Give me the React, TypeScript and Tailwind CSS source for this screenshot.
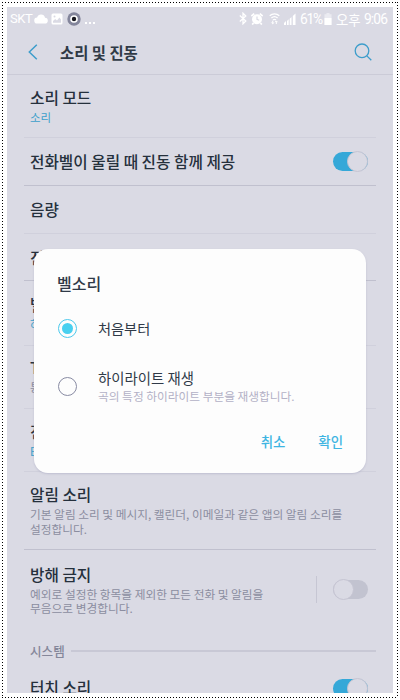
import React from "react";
import clsx from "clsx";

const Toggle: React.FC<{ on?: boolean }> = ({ on }) => (
  <div
    className={clsx(
      "flex h-[19px] w-[35px] shrink-0 items-center rounded-full",
      on ? "justify-end bg-[#35a8d8]" : "justify-start bg-[#c2c3d0]"
    )}
  >
    <div className="-my-px h-[21px] w-[21px] shrink-0 rounded-full border border-[#c5c4d2] bg-[#dadae4]" />
  </div>
);

type RowProps = {
  title: string;
  value?: string;
  desc?: React.ReactNode;
  thick?: boolean;
  className: string;
  children?: React.ReactNode;
};

const Row: React.FC<RowProps> = ({ title, value, desc, thick, className, children }) => (
  <div
    className={clsx(
      "flex shrink-0 justify-between border-b pr-2 pl-1.5",
      thick ? "border-[#c0c0ce]" : "border-[#d0d0dc]",
      className
    )}
  >
    <div>
      <h2 className="text-[15.7px] leading-6 font-medium text-[#25303c]">{title}</h2>
      {value && <p className="text-[11.5px] leading-[14px] text-[#3d9fca]">{value}</p>}
      {desc && <p className="text-[11.7px] leading-[14.5px] text-[#8b8da0]">{desc}</p>}
    </div>
    {children}
  </div>
);

const StatusBar: React.FC = () => (
  <div className="flex h-[23px] shrink-0 items-center justify-between pr-[5px] pl-[3px] whitespace-nowrap text-white">
    <div className="flex items-center">
      <span className="w-[24px] font-[Roboto] text-[13px] leading-6 tracking-[-0.4px]">SKT</span>
      <svg className="h-[11px] w-[14px]" viewBox="0 0 14 11" fill="currentColor">
        <path d="M3.4 10.5a3 3 0 0 1-.3-6A4.1 4.1 0 0 1 11 4.7a2.9 2.9 0 0 1-.2 5.8z" />
      </svg>
      <svg className="ml-[3px] h-3 w-3" viewBox="0 0 12 12">
        <rect x=".5" y=".5" width="11" height="11" rx="1.5" fill="#fff" />
        <path d="M2 9.8V8l2.2-2L6 7.4l2.4-2.8L10 6.5v3.3z" fill="#dadae4" />
        <circle cx="3.5" cy="3.4" r="1" fill="#dadae4" />
      </svg>
      <svg className="ml-[4px] h-[14px] w-[14px]" viewBox="0 0 14 14">
        <circle cx="7" cy="7" r="6.7" fill="#83859b" />
        <circle cx="7" cy="7" r="3.8" fill="#fff" />
        <circle cx="7" cy="7" r="2.2" fill="#16161e" />
      </svg>
      <svg className="ml-[4px] h-[12px] w-[11px]" viewBox="0 0 11 12" fill="currentColor">
        <rect x="0" y="9" width="2" height="2" />
        <rect x="4" y="9" width="2" height="2" />
        <rect x="8" y="9" width="2" height="2" />
      </svg>
    </div>
    <div className="flex items-center">
      <svg className="h-[13px] w-2" viewBox="0 0 8 13" fill="none" stroke="currentColor" strokeWidth="1.3">
        <path d="M.8 3.6 6.8 9 4 11.8V1.2L6.8 4 .8 9.4" />
      </svg>
      <svg className="ml-[4px] h-3 w-3" viewBox="0 0 12 12">
        <circle cx="6" cy="6.2" r="5" fill="#fff" />
        <path d="M.3 3.2 3.2.6M11.7 3.2 8.8.6M2.5 10 1.2 11.6M9.5 10l1.3 1.6" stroke="#fff" strokeWidth="1.7" />
        <path d="M6 3.4v3l2.2.8" fill="none" stroke="#dadae4" strokeWidth="1.2" />
      </svg>
      <svg className="ml-[6px] h-[13px] w-[11px]" viewBox="0 0 11 13" fill="none" stroke="currentColor" strokeWidth="1.3">
        <path d="M.7 3.7a7 7 0 0 1 9.6 0M2.4 6a4.6 4.6 0 0 1 6.2 0" />
        <path d="M4 8a2.3 2.3 0 0 1 3 0" />
        <path d="M3.7 8.7v3M2.4 10.5l1.3 1.3L5 10.5M7.3 12V9M6 10.2l1.3-1.3 1.3 1.3" strokeWidth="1" />
      </svg>
      <svg className="ml-[4px] h-3 w-3" viewBox="0 0 12 12" fill="currentColor">
        <path d="M0 12v-2l2-2v4zM3 12V8l1.7-1.7V12zM5.7 12V5.7L7.5 4v8zM8.8 12V3L11.5.4V12z" />
      </svg>
      <span className="ml-[4px] w-[22px] font-[Roboto] text-[13.8px] leading-6 tracking-[-1.2px]">61%</span>
      <svg className="ml-[2px] h-[12px] w-2" viewBox="0 0 8 12">
        <path d="M2.5 0h3v1.2h2V12H.5V1.2h2z" fill="#ebebf1" />
        <path d="M.5 5h7v7h-7z" fill="#fff" />
      </svg>
      <span className="ml-[4px] w-[25px] text-[13.4px] leading-6">오후</span>
      <span className="ml-[3px] w-[24px] font-[Roboto] text-[13.8px] leading-6 tracking-[-0.9px]">9:06</span>
    </div>
  </div>
);

const RingtoneDialog: React.FC = () => (
  <div className="absolute top-[242px] left-[27px] flex h-[224px] w-[332px] flex-col rounded-[14px] bg-[#fdfdfd] px-[23px] text-[#303a48] shadow-[0_1px_2px_rgba(150,150,180,0.4)]">
    <h3 className="mt-[22px] text-[16px] leading-6 font-medium">벨소리</h3>
    <div className="mt-[21px] flex h-6 items-center">
      <div className="ml-px flex h-[19px] w-[19px] items-center justify-center rounded-full border border-[#4cc9ec]">
        <div className="h-[11px] w-[11px] rounded-full bg-[#48d0f0]" />
      </div>
      <span className="ml-[21px] text-[14.2px] leading-6">처음부터</span>
    </div>
    <div className="mt-[28px] flex items-center">
      <div className="ml-px h-[19px] w-[19px] rounded-full border border-[#888ba3]" />
      <div className="ml-[21px]">
        <p className="text-[14.4px] leading-5">하이라이트 재생</p>
        <p className="text-[11.7px] leading-4 text-[#b3b1c6]">곡의 특정 하이라이트 부분을 재생합니다.</p>
      </div>
    </div>
    <div className="mt-[25px] flex justify-end gap-[33px] text-[13.4px] leading-6 font-medium text-[#3fb5e2]">
      <button>취소</button>
      <button>확인</button>
    </div>
  </div>
);

const App: React.FC = () => {
  return (
    <div className="h-[700px] w-[400px] overflow-hidden bg-white p-[2px]">
      <div className="h-[696px] w-[396px] bg-[repeating-linear-gradient(90deg,#000_0_1px,transparent_1px_3px),repeating-linear-gradient(90deg,#000_0_1px,transparent_1px_3px),repeating-linear-gradient(180deg,#000_0_1px,transparent_1px_3px),repeating-linear-gradient(180deg,#000_0_1px,transparent_1px_3px)] bg-[size:100%_1px,100%_1px,1px_100%,1px_100%] bg-[position:top,bottom,left,right] bg-no-repeat p-[5px]">
        <div className="relative flex h-[686px] w-[386px] flex-col overflow-hidden bg-[#dadae4] font-['Noto_Sans_CJK_KR',sans-serif]">
          <StatusBar />
          <header className="flex h-[45px] shrink-0 items-center border-b border-[#cbcbd7] pr-[21px] pl-[21px]">
            <svg className="h-4 w-[10px]" viewBox="0 0 10 16" fill="none" stroke="#3d9dcb" strokeWidth="1.5">
              <path d="M8.8.8 1.3 8l7.5 7.2" />
            </svg>
            <h1 className="ml-[22px] flex-1 text-[15.4px] leading-6 font-bold text-[#303a46]">소리 및 진동</h1>
            <svg className="h-[18px] w-[18px]" viewBox="0 0 18 18" fill="none" stroke="#3d9dcb" strokeWidth="1.3">
              <circle cx="8" cy="7.8" r="6.8" />
              <path d="m12.6 12.6 4.7 4.6" />
            </svg>
          </header>
          <main className="flex flex-1 flex-col px-[17px]">
            <Row className="h-[63px] pt-[11px]" title="소리 모드" value="소리" />
            <Row className="h-12 pt-3" title="전화벨이 울릴 때 진동 함께 제공" thick>
              <div className="pt-[2px]">
                <Toggle on />
              </div>
            </Row>
            <Row className="h-12 pt-3" title="음량" />
            <Row className="h-[47px] pt-3" title="진동 세기" thick />
            <Row className="h-[65px] pt-3" title="벨소리" value="하이라이트" />
            <Row className="h-[63px] pt-[10px]" title="T 벨소리" desc="통화 벨소리" />
            <Row className="h-[63px] pt-[11px]" title="진동 패턴" value="Basic call" />
            <Row
              className="h-[78px] pt-[11px]"
              title="알림 소리"
              desc={
                <>
                  기본 알림 소리 및 메시지, 캘린더, 이메일과 같은 앱의 알림 소리를
                  <br />
                  설정합니다.
                </>
              }
              thick
            />
            <Row
              className="h-[89px] border-b-0 pt-[12.5px]"
              title="방해 금지"
              desc={
                <>
                  예외로 설정한 항목을 제외한 모든 전화 및 알림을
                  <br />
                  무음으로 변경합니다.
                </>
              }
            >
              <div className="mt-[13.5px] flex h-[27px] items-center gap-4 border-l border-[#c6c6d3] pl-4">
                <Toggle />
              </div>
            </Row>
            <div className="flex h-6 shrink-0 items-center pl-1.5">
              <span className="w-[41px] text-[12.6px] leading-6 font-medium text-[#85879a]">시스템</span>
              <div className="h-[1.5px] flex-1 bg-[#c8c8d5]" />
            </div>
            <Row className="h-12 border-b-0 pt-[13px]" title="터치 소리">
              <div className="pt-[3px]">
                <Toggle on />
              </div>
            </Row>
          </main>
          <RingtoneDialog />
        </div>
      </div>
    </div>
  );
};

export default App;
